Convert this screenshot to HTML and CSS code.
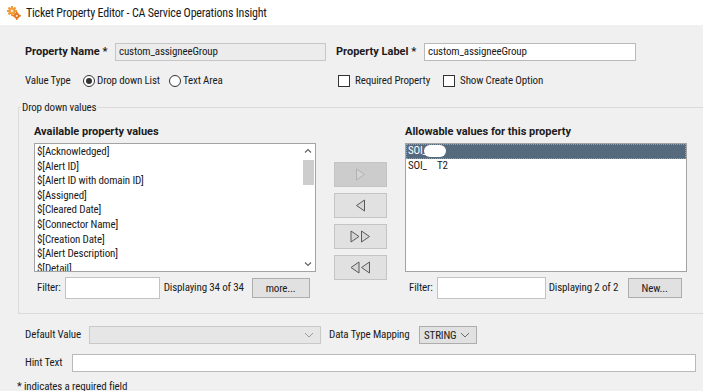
FILE: index.html
```html
<!DOCTYPE html>
<html>
<head>
<meta charset="utf-8">
<link rel="stylesheet" href="styles.css">
</head>
<body>
<div class="window">
  <div class="titlebar">
    <svg class="appicon" width="14" height="14" viewBox="0 0 14 14">
      <g fill="#f29a38">
        <circle cx="5" cy="5" r="3.6"/>
        <rect x="4" y="0" width="2" height="10"/>
        <rect x="0" y="4" width="10" height="2"/>
        <rect x="4" y="0" width="2" height="10" transform="rotate(45 5 5)"/>
        <rect x="4" y="0" width="2" height="10" transform="rotate(-45 5 5)"/>
      </g>
      <circle cx="5" cy="5" r="1.4" fill="#fde6c8"/>
      <g fill="#e8731a">
        <circle cx="9.8" cy="9.8" r="2.8"/>
        <rect x="9" y="5.8" width="1.6" height="8"/>
        <rect x="5.8" y="9" width="8" height="1.6"/>
      </g>
      <circle cx="9.8" cy="9.8" r="1.1" fill="#fde6c8"/>
    </svg>
    <span class="title">Ticket Property Editor - CA Service Operations Insight</span>
  </div>

  <div class="row row-names">
    <label class="lbl bold w-name">Property Name *</label>
    <div class="field disabled w-namefield">custom_assigneeGroup</div>
    <label class="lbl bold w-label">Property Label *</label>
    <div class="field w-labelfield">custom_assigneeGroup</div>
  </div>

  <div class="row row-type">
    <div class="typepart">
      <span class="lbl w-type">Value Type</span>
      <span class="radio checked"></span><span class="lbl opt">Drop down List</span>
      <span class="radio second"></span><span class="lbl opt">Text Area</span>
    </div>
    <span class="check first"></span><span class="lbl opt">Required Property</span>
    <span class="check second"></span><span class="lbl opt">Show Create Option</span>
  </div>

  <fieldset class="group">
    <legend>Drop down values</legend>
    <div class="cols">
      <div class="col">
        <div class="heading">Available property values</div>
        <div class="listbox">
          <ul class="items">
            <li>$[Acknowledged]</li>
            <li>$[Alert ID]</li>
            <li>$[Alert ID with domain ID]</li>
            <li>$[Assigned]</li>
            <li>$[Cleared Date]</li>
            <li>$[Connector Name]</li>
            <li>$[Creation Date]</li>
            <li>$[Alert Description]</li>
            <li>$[Detail]</li>
          </ul>
          <div class="scrollbar">
            <svg class="sarrow" width="14" height="14" viewBox="0 0 14 14"><path d="M4 8.5 L7 5.5 L10 8.5" fill="none" stroke="#606060" stroke-width="1.1"/></svg>
            <div class="thumb"></div>
            <div class="track"></div>
            <svg class="sarrow" width="14" height="14" viewBox="0 0 14 14"><path d="M4 5.5 L7 8.5 L10 5.5" fill="none" stroke="#606060" stroke-width="1.1"/></svg>
          </div>
        </div>
        <div class="filterrow left">
          <span class="lbl">Filter:</span>
          <div class="field filter-l"></div>
          <span class="lbl count-l">Displaying 34 of 34</span>
          <div class="btn more">more...</div>
        </div>
      </div>

      <div class="mid">
        <div class="abtn disabledbtn">
          <svg width="13" height="13" viewBox="0 0 13 13"><polygon points="2.5,1 10.5,6.5 2.5,12" fill="#d4d4d4" stroke="#b2b2b2"/></svg>
        </div>
        <div class="abtn">
          <svg width="13" height="13" viewBox="0 0 13 13"><polygon points="10.5,1 2.5,6.5 10.5,12" fill="#d6d6d6" stroke="#5a5a5a"/></svg>
        </div>
        <div class="abtn">
          <svg width="24" height="13" viewBox="0 0 24 13"><polygon points="2,1 10,6.5 2,12" fill="#d6d6d6" stroke="#5a5a5a"/><polygon points="12.5,1 20.5,6.5 12.5,12" fill="#d6d6d6" stroke="#5a5a5a"/></svg>
        </div>
        <div class="abtn">
          <svg width="24" height="13" viewBox="0 0 24 13"><polygon points="10,1 2,6.5 10,12" fill="#d6d6d6" stroke="#5a5a5a"/><polygon points="20.5,1 12.5,6.5 20.5,12" fill="#d6d6d6" stroke="#5a5a5a"/></svg>
        </div>
      </div>

      <div class="col">
        <div class="heading">Allowable values for this property</div>
        <div class="listbox right">
          <ul class="items">
            <li class="selected">SOI_<span class="blob"></span></li>
            <li>SOI_<span class="gap"></span>T2</li>
          </ul>
        </div>
        <div class="filterrow rightrow">
          <span class="lbl">Filter:</span>
          <div class="field filter-r"></div>
          <span class="lbl count-r">Displaying 2 of 2</span>
          <div class="btn new">New...</div>
        </div>
      </div>
    </div>
  </fieldset>

  <div class="row row-default">
    <span class="lbl w-default">Default Value</span>
    <div class="select sel-default disabled">
      <span class="seltext"></span>
      <svg width="10" height="6" viewBox="0 0 10 6"><path d="M1 1 L5 5 L9 1" fill="none" stroke="#9a9a9a" stroke-width="1"/></svg>
    </div>
    <span class="lbl w-dtm">Data Type Mapping</span>
    <div class="select sel-type">
      <span class="seltext">STRING</span>
      <svg width="10" height="6" viewBox="0 0 10 6"><path d="M1 1 L5 5 L9 1" fill="none" stroke="#6a6a6a" stroke-width="1"/></svg>
    </div>
  </div>

  <div class="row row-hint">
    <span class="lbl w-hint">Hint Text</span>
    <div class="field hint"></div>
  </div>

  <div class="footnote">* indicates a required field</div>
</div>
</body>
</html>
```

FILE: styles.css
```css
* { box-sizing: border-box; }
html, body { margin: 0; padding: 0; }
body {
  width: 703px;
  height: 391px;
  overflow: hidden;
  background: #f0f0f0;
  font-family: Roboto, "Liberation Sans", Arial, sans-serif;
  font-stretch: condensed;
  letter-spacing: -0.15px;
  font-size: 11px;
  color: #1b1b1b;
}
.window { width: 703px; height: 391px; overflow: hidden; }

.titlebar {
  height: 25px;
  background: #ffffff;
  display: flex;
  align-items: center;
  padding-left: 7px;
}
.appicon { margin-right: 5px; }
.title { font-size: 12px; letter-spacing: -0.2px; color: #1a1a1a; }

.row { display: flex; align-items: center; }
.lbl { white-space: nowrap; line-height: 14px; }
.bold {
  font-weight: bold;
  font-stretch: normal;
  letter-spacing: 0;
}

.row-names { margin-top: 18px; padding-left: 25px; height: 18px; }
.w-name { width: 90px; }
.w-label { width: 88px; margin-left: 10px; }
.field {
  height: 18px;
  background: #ffffff;
  border: 1px solid #b9b9b9;
  padding-left: 3px;
  line-height: 16px;
  white-space: nowrap;
}
.field.disabled { background: #ececec; border-color: #c6c6c6; }
.w-namefield { width: 211px; }
.w-labelfield { width: 212px; }

.row-type { margin-top: 13px; padding-left: 25px; height: 14px; }
.typepart { width: 313px; display: flex; align-items: center; }
.w-type { width: 58px; }
.radio {
  width: 12px; height: 12px;
  border: 1px solid #333333;
  border-radius: 50%;
  background: #ffffff;
  margin-right: 2px;
  display: inline-flex;
  align-items: center;
  justify-content: center;
}
.radio.checked::after {
  content: "";
  width: 6px; height: 6px;
  border-radius: 50%;
  background: #333333;
}
.radio.second { margin-left: 9px; }
.check {
  width: 12px; height: 12px;
  border: 1px solid #333333;
  background: #ffffff;
  margin-right: 5px;
}
.check.second { margin-left: 13px; }

.group {
  margin: 13px 0 0 18px;
  width: 720px;
  border: 1px solid #dadada;
  padding: 11px 0 14px 0;
  min-width: 0;
}
.group legend {
  margin-left: 2px;
  padding: 0 1px;
  line-height: 13px;
  font-size: 11px;
}
.cols { display: flex; padding-left: 15px; }
.col { display: flex; flex-direction: column; width: 282px; }
.heading {
  font-weight: bold;
  font-stretch: normal;
  letter-spacing: 0;
  line-height: 14px;
  height: 14px;
  margin-bottom: 4px;
}
.listbox {
  height: 129px;
  background: #ffffff;
  border: 1px solid #a3a3a3;
  display: flex;
  overflow: hidden;
}
.items {
  list-style: none;
  margin: 0;
  padding: 1px 0 0 0;
  flex: 1;
}
.items li {
  height: 14.6px;
  line-height: 14.6px;
  padding-left: 2px;
  white-space: nowrap;
}
.scrollbar {
  width: 14px;
  display: flex;
  flex-direction: column;
  align-items: center;
  background: #ffffff;
}
.sarrow { flex: none; }
.thumb { width: 11px; height: 25px; background: #cdcdcd; margin-top: 2px; flex: none; }
.track { flex: 1; }

.listbox.right .items { padding-top: 0; }
.listbox.right li.selected {
  background: #566a7d;
  color: #ffffff;
  outline: 1px dotted #8aa0b4;
  outline-offset: -1px;
}
.blob {
  display: inline-block;
  width: 22px; height: 12px;
  background: #ffffff;
  border-radius: 6px;
  vertical-align: middle;
  margin-left: -3px;
}
.gap { display: inline-block; width: 10px; }

.filterrow { display: flex; align-items: center; margin-top: 5px; height: 22px; }
.filterrow.left { padding-left: 3px; }
.filterrow.rightrow { padding-left: 4px; }
.filter-l { width: 95px; height: 22px; margin-left: 4px; border-color: #c3c3c3; }
.filter-r { width: 109px; height: 22px; margin-left: 4px; border-color: #c3c3c3; }
.count-l { margin-left: 4px; width: 78px; }
.count-r { margin-left: 3px; width: 69px; }
.btn {
  height: 20px;
  background: #e1e1e1;
  border: 1px solid #adadad;
  display: flex;
  align-items: center;
  justify-content: center;
}
.more { width: 58px; margin-left: 10px; }
.new { width: 54px; margin-left: 10px; }

.mid {
  width: 53px;
  margin: 37px 18px 0 18px;
  display: flex;
  flex-direction: column;
  gap: 6px;
}
.abtn {
  height: 25px;
  background: #e1e1e1;
  border: 1px solid #c4c4c4;
  display: flex;
  align-items: center;
  justify-content: center;
}
.abtn.disabledbtn { background: #cccccc; border-color: #c4c4c4; }

.row-default { margin-top: 12px; padding-left: 25px; height: 18px; }
.w-default { width: 64px; }
.select {
  height: 18px;
  display: flex;
  align-items: center;
  justify-content: space-between;
  padding: 0 6px 0 4px;
  border: 1px solid #adadad;
  background: #e1e1e1;
}
.select.disabled { background: #e6e6e6; border-color: #c9c9c9; }
.sel-default { width: 232px; }
.w-dtm { margin-left: 8px; width: 90px; }
.sel-type { width: 58px; }

.row-hint { margin-top: 10px; padding-left: 25px; height: 18px; }
.w-hint { width: 47px; }
.hint { width: 624px; }

.footnote { margin-top: 8px; padding-left: 17px; line-height: 14px; }
```
